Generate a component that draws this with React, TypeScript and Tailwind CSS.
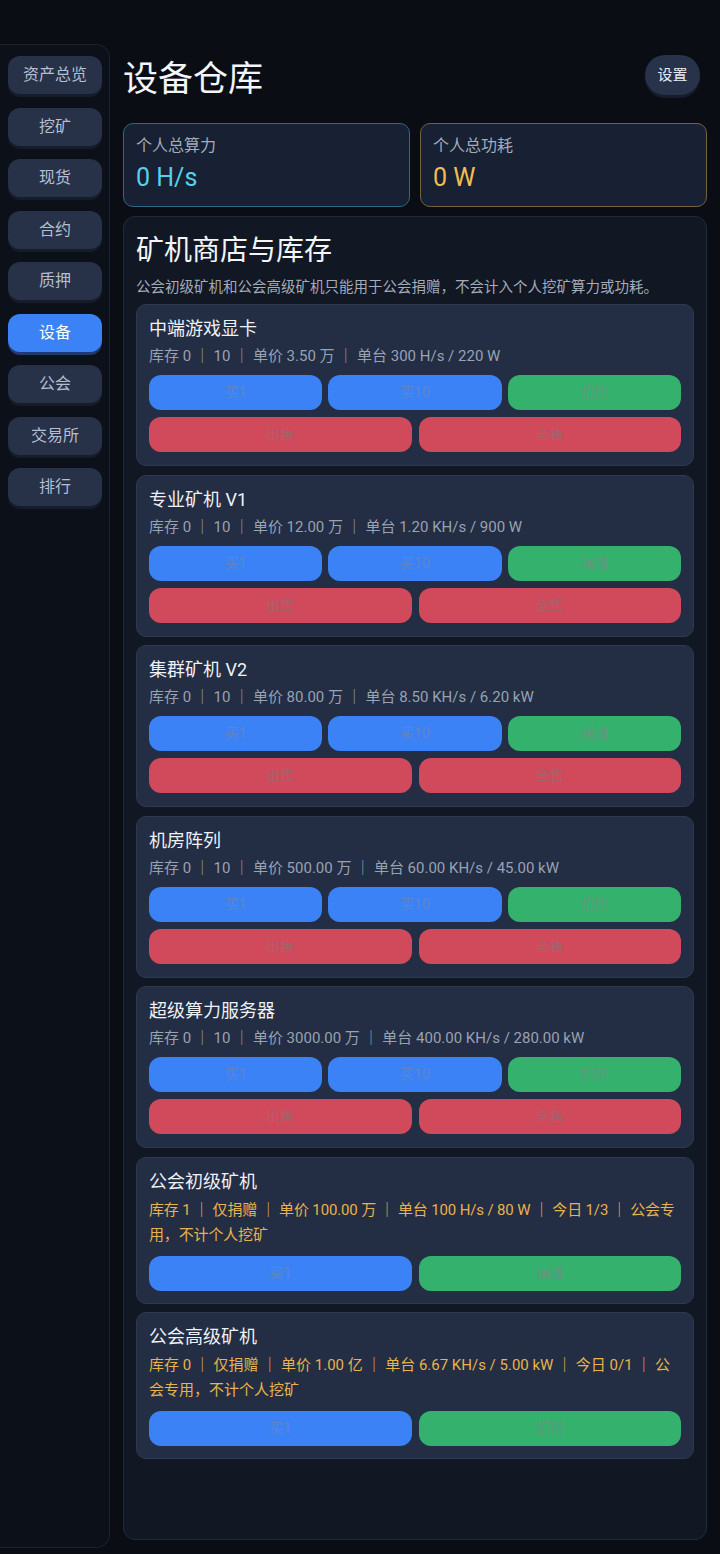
const navItems = ['资产总览', '挖矿', '现货', '合约', '质押', '设备', '公会', '交易所', '排行'];

type Machine = {
  name: string;
  info: string;
  guild?: boolean;
  tight?: boolean;
};

const machines: Machine[] = [
  { name: '中端游戏显卡', info: '库存 0 ｜ 10 ｜ 单价 3.50 万 ｜ 单台 300 H/s / 220 W' },
  { name: '专业矿机 V1', info: '库存 0 ｜ 10 ｜ 单价 12.00 万 ｜ 单台 1.20 KH/s / 900 W' },
  { name: '集群矿机 V2', info: '库存 0 ｜ 10 ｜ 单价 80.00 万 ｜ 单台 8.50 KH/s / 6.20 kW' },
  { name: '机房阵列', info: '库存 0 ｜ 10 ｜ 单价 500.00 万 ｜ 单台 60.00 KH/s / 45.00 kW' },
  { name: '超级算力服务器', info: '库存 0 ｜ 10 ｜ 单价 3000.00 万 ｜ 单台 400.00 KH/s / 280.00 kW' },
  {
    name: '公会初级矿机',
    info: '库存 1 ｜ 仅捐赠 ｜ 单价 100.00 万 ｜ 单台 100 H/s / 80 W ｜ 今日 1/3 ｜ 公会专用，不计个人挖矿',
    guild: true,
    tight: true,
  },
  {
    name: '公会高级矿机',
    info: '库存 0 ｜ 仅捐赠 ｜ 单价 1.00 亿 ｜ 单台 6.67 KH/s / 5.00 kW ｜ 今日 0/1 ｜ 公会专用，不计个人挖矿',
    guild: true,
  },
];

// disabled-looking action buttons: faint label on a solid fill
const btnBase = 'h-[35px] rounded-[12px] text-[14px] flex items-center justify-center';
const blueBtn = `${btnBase} bg-[#3b82f6] text-[#5f86c8]`;
const greenBtn = `${btnBase} bg-[#34b16d] text-[#5c9a7c]`;
const redBtn = `${btnBase} bg-[#d04a5b] text-[#a5636d]`;

function MachineCard({ m }: { m: Machine }) {
  if (m.guild) {
    return (
      <div className="rounded-[10px] border border-[#2f3a52] bg-[#232d43] px-3 pt-[12px] pb-[12px]">
        <div className="text-[18px] leading-[24px] text-[#eef2f8]">{m.name}</div>
        <div
          className={
            m.tight
              ? 'mt-[4px] text-[15px] leading-[25px] tracking-[-0.15px] text-[#e8b34c]'
              : 'mt-[4px] text-[15px] leading-[25px] text-[#e8b34c]'
          }
        >
          {m.info}
        </div>
        <div className="mt-[8px] grid grid-cols-2 gap-[7px]">
          <div className={blueBtn}>买1</div>
          <div className={greenBtn}>捐赠</div>
        </div>
      </div>
    );
  }

  return (
    <div className="rounded-[10px] border border-[#2f3a52] bg-[#232d43] px-3 pt-[12px] pb-[13px]">
      <div className="text-[18px] leading-[24px] text-[#eef2f8]">{m.name}</div>
      <div className="mt-[5px] text-[15px] leading-[20px] text-[#98a2b3]">{m.info}</div>
      <div className="mt-[9px] flex flex-col gap-[7px]">
        <div className="grid grid-cols-3 gap-[6px]">
          <div className={blueBtn}>买1</div>
          <div className={blueBtn}>买10</div>
          <div className={greenBtn}>捐赠</div>
        </div>
        <div className="grid grid-cols-2 gap-[7px]">
          <div className={redBtn}>出售</div>
          <div className={redBtn}>全售</div>
        </div>
      </div>
    </div>
  );
}

export default function App() {
  return (
    <div
      className="flex min-h-[1554px] w-[720px] bg-[#0a0d14] text-white"
      style={{ fontFamily: 'Roboto, "Noto Sans CJK SC", sans-serif' }}
    >
      {/* Sidebar */}
      <aside className="mt-[44px] mb-[6px] w-[110px] shrink-0 rounded-r-[14px] border-y border-r border-[#1a2130] bg-[#0c1019] pt-[11px]">
        <nav className="flex flex-col gap-[13.5px] pl-[8px] pr-[7px]">
          {navItems.map((item) =>
            item === '设备' ? (
              <div
                key={item}
                className="flex h-[38px] items-center justify-center rounded-[12px] bg-[#3b82f6] text-[16px] text-white shadow-[0_3px_0_#1e3a6e]"
              >
                {item}
              </div>
            ) : (
              <div
                key={item}
                className="flex h-[38px] items-center justify-center rounded-[12px] bg-[#273148] text-[16px] text-[#b4bfd2] shadow-[0_3px_0_#161c2a]"
              >
                {item}
              </div>
            )
          )}
        </nav>
      </aside>

      {/* Main */}
      <main className="flex flex-1 flex-col pl-[13px] pr-[13px] pt-[55px] pb-[14px]">
        <header className="flex h-[40px] items-center justify-between">
          <h1 className="mt-[8px] text-[35px] font-normal leading-none text-[#f3f5f9]">设备仓库</h1>
          <button className="mr-[7px] h-[40px] w-[55px] rounded-full bg-[#28324a] text-[15px] text-[#e6eaf2] shadow-[0_3px_0_#161c2a]">
            设置
          </button>
        </header>

        <section className="mt-[28px] grid grid-cols-2 gap-[10px]">
          <div className="h-[84px] rounded-[10px] border border-[#2b6a80] bg-[#172133] px-3 pt-[11px]">
            <div className="text-[16px] leading-[22px] text-[#a3acbb]">个人总算力</div>
            <div className="mt-[6px] text-[25px] leading-[30px] text-[#56d0ee]">0 H/s</div>
          </div>
          <div className="h-[84px] rounded-[10px] border border-[#77613d] bg-[#172133] px-3 pt-[11px]">
            <div className="text-[16px] leading-[22px] text-[#a3acbb]">个人总功耗</div>
            <div className="mt-[6px] text-[25px] leading-[30px] text-[#f2bd4e]">0 W</div>
          </div>
        </section>

        <section className="mt-[9px] flex-1 rounded-[12px] border border-[#222b3d] bg-[#111723] px-3 pt-[16px]">
          <h2 className="text-[28px] font-normal leading-[36px] text-[#f3f5f9]">矿机商店与库存</h2>
          <p className="mt-[9px] text-[14.5px] leading-[20px] text-[#a3acbb]">
            公会初级矿机和公会高级矿机只能用于公会捐赠，不会计入个人挖矿算力或功耗。
          </p>
          <div className="mt-[6px] flex flex-col gap-[8.5px]">
            {machines.map((m) => (
              <MachineCard key={m.name} m={m} />
            ))}
          </div>
        </section>
      </main>
    </div>
  );
}
